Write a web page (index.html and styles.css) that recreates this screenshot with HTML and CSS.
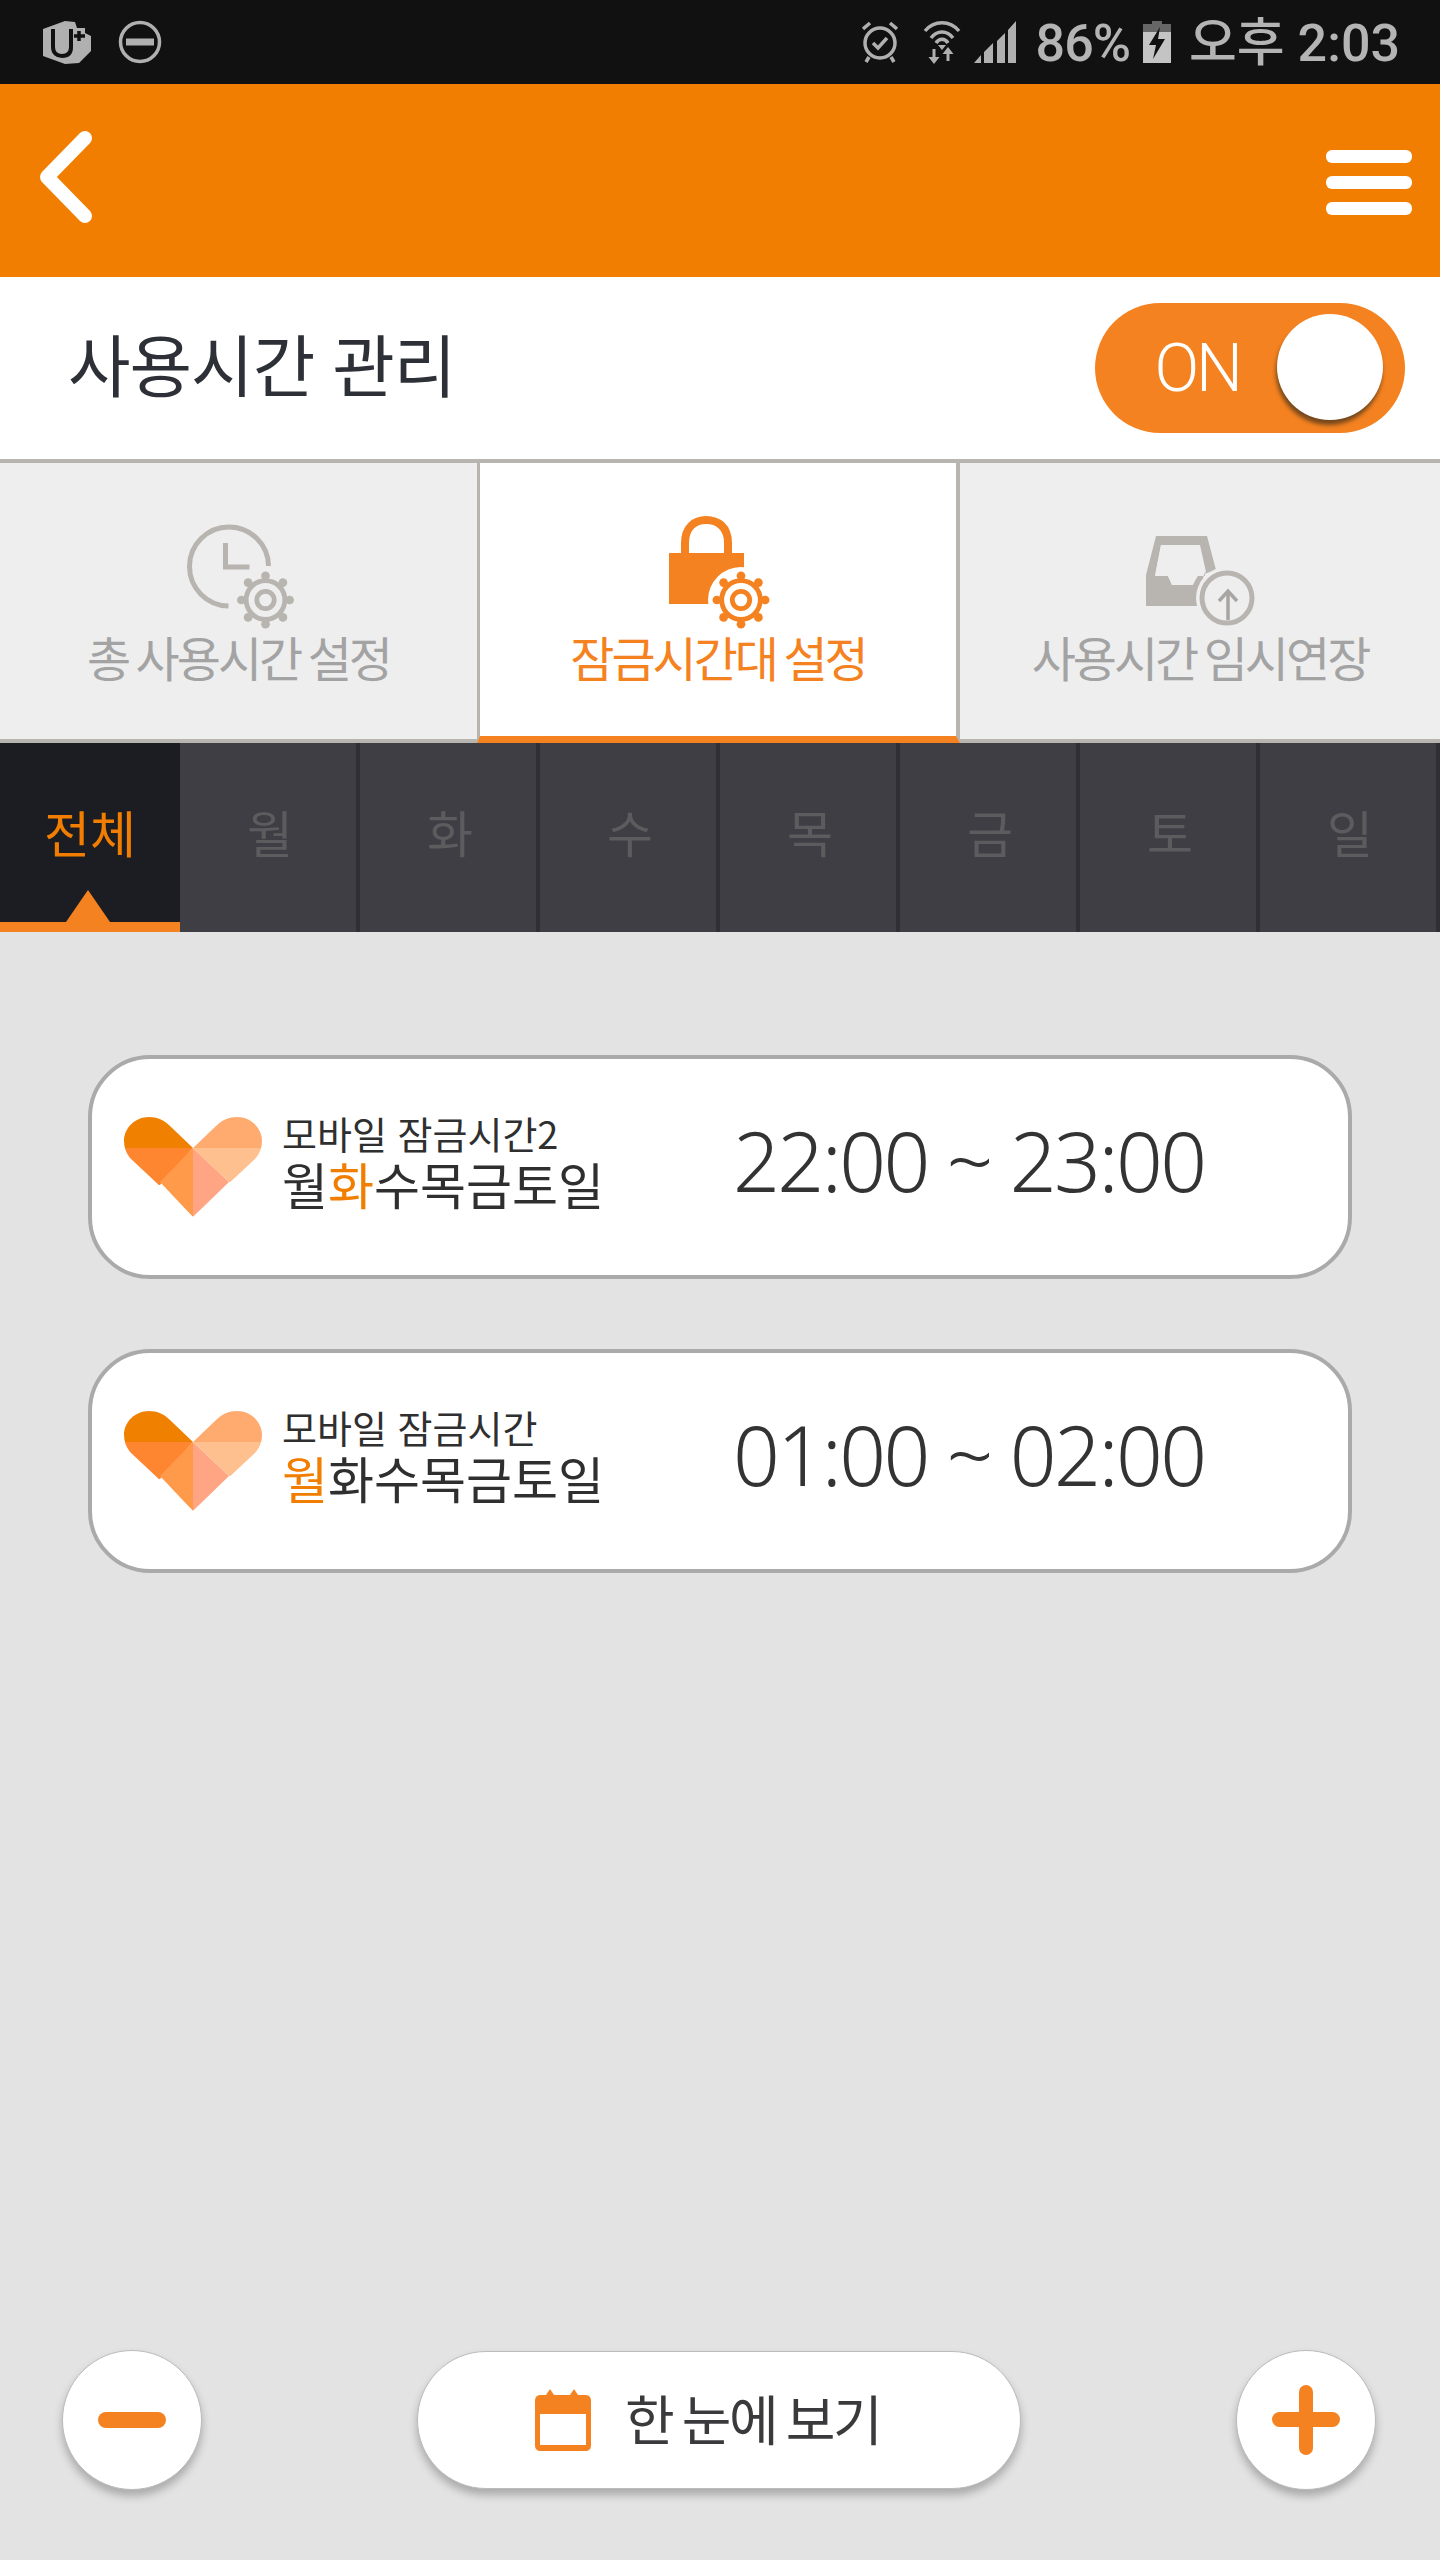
FILE: index.html
```html
<!DOCTYPE html>
<html lang="ko">
<head>
    <meta charset="UTF-8">
    <meta name="viewport" content="width=device-width, initial-scale=1.0">
    <title>사용시간 관리</title>
    <link rel="stylesheet" href="styles.css">
</head>
<body>
    <svg class="defs" width="0" height="0">
        <defs>
            <symbol id="gear" viewBox="-30 -30 60 60">
                <g fill="currentColor">
                    <circle cx="0" cy="-25" r="4.5"/>
                    <circle cx="0" cy="25" r="4.5"/>
                    <circle cx="-25" cy="0" r="4.5"/>
                    <circle cx="25" cy="0" r="4.5"/>
                    <circle cx="-18" cy="-18" r="4.5"/>
                    <circle cx="18" cy="-18" r="4.5"/>
                    <circle cx="-18" cy="18" r="4.5"/>
                    <circle cx="18" cy="18" r="4.5"/>
                </g>
                <circle r="20" fill="none" stroke="currentColor" stroke-width="5"/>
                <circle r="9" fill="none" stroke="currentColor" stroke-width="5"/>
            </symbol>
            <clipPath id="heartClip">
                <path d="M69 31L46 9C40 3 33 0 25 0C11 0 0 11 0 24C0 30 2 36 6 41L69 100L132 41C136 36 138 30 138 24C138 11 127 0 113 0C105 0 98 3 92 9Z"/>
            </clipPath>
            <symbol id="heart" viewBox="0 0 138 100">
                <g clip-path="url(#heartClip)">
                    <rect x="0" y="0" width="69" height="31" fill="#f08000"/>
                    <rect x="69" y="0" width="69" height="31" fill="#ffab70"/>
                    <polygon points="0,31 69,31 36,68 0,68" fill="#ff8630"/>
                    <polygon points="69,31 36,65 69,100" fill="#ff9a4a"/>
                    <polygon points="69,31 105,65 69,100" fill="#ffa583"/>
                    <polygon points="69,31 138,31 138,68 105,65" fill="#ffc08f"/>
                </g>
            </symbol>
        </defs>
    </svg>

    <div class="status-bar">
        <svg class="icon-uplus" width="50" height="44" viewBox="0 0 50 44">
            <path d="M2 9L24 1L34 2L36 8L44 8L44 13L50 16L50 31L38 43L24 44L2 36Z" fill="#b0b0b0"/>
            <path d="M12 9V27C12 33 16 36 21 36C27 36 30 33 30 27V9" fill="none" stroke="#111" stroke-width="4"/>
            <path d="M38 11V21M33 16H44" stroke="#111" stroke-width="3.5"/>
        </svg>
        <svg class="icon-dnd" width="44" height="44" viewBox="0 0 44 44">
            <circle cx="22" cy="22" r="19.5" fill="none" stroke="#b0b0b0" stroke-width="3.5"/>
            <rect x="8" y="18.500" width="28" height="7" fill="#b0b0b0"/>
        </svg>
        <div class="status-right">
            <svg class="icon-alarm" width="36" height="42" viewBox="0 0 36 42">
                <circle cx="18" cy="22" r="15" fill="none" stroke="#b0b0b0" stroke-width="3.500"/>
                <path d="M11 22L16 27L25 17" fill="none" stroke="#b0b0b0" stroke-width="3.500"/>
                <path d="M1 8L8 2M35 8L28 2M7 36L4 41M29 36L32 41" stroke="#b0b0b0" stroke-width="3.500"/>
            </svg>
            <svg class="icon-wifi" width="38" height="45" viewBox="0 0 38 45">
                <path d="M2 11C11 0 27 0 36 11M8 18C14 10 24 10 30 18M13 23C16 18 22 18 25 23" fill="none" stroke="#b0b0b0" stroke-width="3.500"/>
                <path d="M15 25H23L19 30Z" fill="#b0b0b0"/>
                <path d="M9.500 29H12.500V37H16.500L11 44L5.500 37H9.500Z" fill="#b0b0b0"/>
                <path d="M23.500 41H26.500V34H30.500L25 27L19.500 34H23.500Z" fill="#b0b0b0"/>
            </svg>
            <svg class="icon-signal" width="43" height="44" viewBox="0 0 43 44">
                <path d="M0 43L7 35V43ZM10 43V32L19 23V43ZM23 43V21L31 13V43ZM34 43V10L42 1V43Z" fill="#b0b0b0"/>
            </svg>
            <span class="battery-text">86%</span>
            <svg class="icon-battery" width="28" height="42" viewBox="0 0 28 42">
                <rect x="9" y="0" width="10" height="4" fill="#666"/>
                <rect x="0" y="3" width="28" height="8" fill="#666"/>
                <rect x="0" y="11" width="28" height="31" fill="#c4c4c4"/>
                <path d="M17 6L6 24H13L10 38L22 18H15Z" fill="#111"/>
            </svg>
            <span class="clock">오후 2:03</span>
        </div>
    </div>

    <header class="app-header">
        <svg width="60" height="100" viewBox="0 0 60 100">
            <polyline points="49,7 11,46 49,85" fill="none" stroke="#fff" stroke-width="14" stroke-linecap="round" stroke-linejoin="round"/>
        </svg>
        <div class="hamburger">
            <span></span>
            <span></span>
            <span></span>
        </div>
    </header>

    <div class="title-row">
        <h1>사용시간 관리</h1>
        <div class="toggle">
            <span class="toggle-label">ON</span>
            <span class="toggle-knob"></span>
        </div>
    </div>

    <nav class="tabs">
        <div class="tab">
            <svg width="120" height="116" viewBox="178.500 516 120 116">
                <path d="M228 606A39.500 39.500 0 1 1 268 566" fill="none" stroke="#b8b4b0" stroke-width="5"/>
                <path d="M225 543V567H249" fill="none" stroke="#b8b4b0" stroke-width="5"/>
                <use href="#gear" x="236" y="571" width="58" height="58" class="gear-grey"/>
            </svg>
            <span class="tab-label">총 사용시간 설정</span>
        </div>
        <div class="tab active">
            <svg width="120" height="116" viewBox="658 516 120 116">
                <path d="M685 555V543C685 527 695 520 706 520C718 520 728 527 728 543V555" fill="none" stroke="#f58220" stroke-width="8"/>
                <rect x="669" y="553" width="75" height="51" fill="#f58220"/>
                <circle cx="741" cy="600" r="33" fill="#fff"/>
                <use href="#gear" x="712" y="571" width="58" height="58" class="gear-orange"/>
            </svg>
            <span class="tab-label">잠금시간대 설정</span>
        </div>
        <div class="tab">
            <svg width="120" height="116" viewBox="1140 516 120 116">
                <path d="M1156 536H1207L1216 570L1204 574L1198 606H1146V575ZM1161 545L1155 576H1168L1172 585H1193L1197 576H1205L1198 545Z" fill="#b8b4b0" fill-rule="evenodd"/>
                <path d="M1200 545H1161L1155 576H1168L1172 585H1192L1198 576L1206 572Z" fill="#eee"/>
                <circle cx="1227" cy="598" r="31" fill="#eee"/>
                <circle cx="1227" cy="598" r="25" fill="none" stroke="#b8b4b0" stroke-width="5"/>
                <path d="M1228 620V593M1219 601L1228 591L1237 601" fill="none" stroke="#a8a5a2" stroke-width="3.500"/>
            </svg>
            <span class="tab-label">사용시간 임시연장</span>
        </div>
    </nav>

    <div class="days">
        <div class="day active">전체</div>
        <div class="day">월</div>
        <div class="day">화</div>
        <div class="day">수</div>
        <div class="day">목</div>
        <div class="day">금</div>
        <div class="day">토</div>
        <div class="day">일</div>
    </div>

    <main class="content">
        <div class="schedule-list">
            <div class="schedule">
                <svg class="heart" width="138" height="100"><use href="#heart"/></svg>
                <div class="schedule-info">
                    <div class="schedule-name">모바일 잠금시간2</div>
                    <div class="schedule-days">월<em>화</em>수목금토일</div>
                </div>
                <div class="schedule-time">22:00 ~ 23:00</div>
            </div>
            <div class="schedule">
                <svg class="heart" width="138" height="100"><use href="#heart"/></svg>
                <div class="schedule-info">
                    <div class="schedule-name">모바일 잠금시간</div>
                    <div class="schedule-days"><em>월</em>화수목금토일</div>
                </div>
                <div class="schedule-time">01:00 ~ 02:00</div>
            </div>
        </div>

        <div class="actions">
            <div class="round-btn">
                <svg width="68" height="16" viewBox="0 0 68 16"><rect width="68" height="16" rx="8" fill="#f58220"/></svg>
            </div>
            <div class="overview-btn">
                <svg width="56" height="62" viewBox="0 0 56 62">
                    <path d="M15 0L19 6H35L39 0L43 6H50C54 6 56 8 56 12V56C56 60 54 62 50 62H6C2 62 0 60 0 56V12C0 8 2 6 6 6H11Z" fill="#f58220"/>
                    <rect x="5" y="25" width="46" height="31" fill="#fff"/>
                </svg>
                <span>한 눈에 보기</span>
            </div>
            <div class="round-btn">
                <svg width="68" height="70" viewBox="0 0 68 70">
                    <rect y="27" width="68" height="15" rx="7.500" fill="#f58220"/>
                    <rect x="27" width="14" height="70" rx="7" fill="#f58220"/>
                </svg>
            </div>
        </div>
    </main>
</body>
</html>
```

FILE: styles.css
```css
:root {
    --orange: #f58220;
    --orange-deep: #f17e00;
    --line: #b8b4b0;
    --text-dark: #2f2f2f;
}

* {
    box-sizing: border-box;
}

body {
    margin: 0;
    width: 1440px;
    height: 2560px;
    display: flex;
    flex-direction: column;
    background: #e3e3e3;
    font-family: "Noto Sans CJK KR", "Noto Sans", sans-serif;
    overflow: hidden;
}

.defs {
    position: absolute;
}

.gear-grey {
    color: #b8b4b0;
}

.gear-orange {
    color: var(--orange);
}

/* status bar */
.status-bar {
    height: 84px;
    flex: none;
    display: flex;
    align-items: center;
    padding: 0 40px 0 41px;
    background: #111;
    color: #b4b4b4;
}

.icon-dnd {
    margin-left: 27px;
}

.status-right {
    margin-left: auto;
    display: flex;
    align-items: center;
}

.icon-wifi {
    margin-left: 25px;
}

.icon-signal {
    margin-left: 13px;
}

.battery-text {
    margin-left: 19px;
    margin-top: 2px;
    font-family: Roboto, sans-serif;
    font-weight: 500;
    font-size: 52px;
    letter-spacing: -1px;
}

.icon-battery {
    margin-left: 13px;
}

.clock {
    margin-left: 18px;
    margin-top: 4px;
    font-family: Roboto, "Noto Sans CJK KR", sans-serif;
    font-weight: 500;
    font-size: 52px;
    line-height: 60px;
}

/* orange header */
.app-header {
    height: 193px;
    flex: none;
    display: flex;
    align-items: center;
    justify-content: space-between;
    padding: 0 28px 0 36px;
    background: var(--orange-deep);
}

.hamburger {
    margin-top: 3px;
    display: flex;
    flex-direction: column;
    gap: 13px;
}

.hamburger span {
    display: block;
    width: 86px;
    height: 13px;
    border-radius: 6px;
    background: #fff;
}

/* title row */
.title-row {
    height: 182px;
    flex: none;
    display: flex;
    align-items: center;
    justify-content: space-between;
    padding: 0 35px 0 68px;
    background: #fff;
}

.title-row h1 {
    margin: 0 0 12px;
    font-size: 68px;
    font-weight: 400;
    letter-spacing: -1px;
    color: #2e3038;
}

.toggle {
    width: 310px;
    height: 130px;
    display: flex;
    align-items: center;
    justify-content: flex-end;
    gap: 37px;
    padding-right: 22px;
    border-radius: 65px;
    background: var(--orange);
}

.toggle-label {
    font-family: Roboto, sans-serif;
    font-weight: 300;
    font-size: 66px;
    letter-spacing: -3px;
    color: #fff;
}

.toggle-knob {
    width: 106px;
    height: 106px;
    margin-top: -2px;
    border-radius: 50%;
    background: #fff;
    box-shadow: -1px 5px 4px #74481c;
}

/* tabs */
.tabs {
    height: 284px;
    flex: none;
    display: grid;
    grid-template-columns: 477px 483px 480px;
    border-top: 4px solid var(--line);
}

.tab {
    display: flex;
    flex-direction: column;
    align-items: center;
    padding-top: 53px;
    background: #eee;
    border-bottom: 4px solid var(--line);
    color: #a3a3a3;
}

.tab.active {
    background: #fff;
    border-left: 3px solid var(--line);
    border-right: 4px solid var(--line);
    border-bottom: 7px solid var(--orange);
    color: var(--orange);
}

.tab-label {
    margin-top: -4px;
    font-size: 48px;
    line-height: 56px;
    letter-spacing: -3px;
    word-spacing: -3px;
}

/* day selector */
.days {
    height: 189px;
    flex: none;
    display: grid;
    grid-template-columns: repeat(8, 180px);
}

.day {
    position: relative;
    padding: 53px 0 0 4px;
    text-align: center;
    font-size: 50px;
    line-height: 70px;
    background: #3e3e44;
    border-right: 4px solid #2f2f34;
    color: #5c5c5e;
}

.day.active {
    padding-left: 0;
    background: #1c1d22;
    border-right: none;
    border-bottom: 10px solid var(--orange);
    color: var(--orange-deep);
}

.day.active::after {
    content: "";
    position: absolute;
    left: 66px;
    bottom: 0;
    border-left: 22px solid transparent;
    border-right: 22px solid transparent;
    border-bottom: 32px solid var(--orange);
}

/* schedule cards */
.content {
    flex: 1;
    display: flex;
    flex-direction: column;
    padding: 123px 0 70px;
}

.schedule-list {
    display: flex;
    flex-direction: column;
    gap: 70px;
    padding: 0 88px;
}

.schedule {
    height: 224px;
    display: flex;
    align-items: center;
    padding-left: 32px;
    border: 4px solid #aaa;
    border-radius: 62px;
    background: #fff;
    color: var(--text-dark);
}

.schedule-info {
    width: 451px;
    margin-left: 20px;
    padding-bottom: 10px;
}

.schedule-name {
    font-size: 38px;
    line-height: 42px;
}

.schedule-days {
    font-size: 50px;
    line-height: 58px;
}

.schedule-days em {
    font-style: normal;
    color: var(--orange-deep);
}

.schedule-time {
    margin-bottom: 14px;
    font-family: "Noto Sans", sans-serif;
    font-weight: 300;
    font-size: 82px;
    line-height: 90px;
    letter-spacing: -2.5px;
    color: #333;
}

/* bottom buttons */
.actions {
    margin-top: auto;
    display: flex;
    align-items: center;
    justify-content: space-between;
    padding: 0 64px 0 62px;
}

.round-btn {
    width: 140px;
    height: 140px;
    display: flex;
    align-items: center;
    justify-content: center;
    border: 1px solid #bbb;
    border-radius: 50%;
    background: #fff;
    box-shadow: 0 6px 8px rgba(0, 0, 0, .25);
}

.overview-btn {
    width: 604px;
    height: 138px;
    display: flex;
    align-items: center;
    gap: 34px;
    padding-left: 117px;
    border: 1px solid #bbb;
    border-radius: 69px;
    background: #fff;
    box-shadow: 0 6px 8px rgba(0, 0, 0, .25);
    font-size: 54px;
    letter-spacing: -2.5px;
    word-spacing: -3px;
    color: #3a3a3c;
}

.overview-btn span {
    margin-bottom: 6px;
}
```
